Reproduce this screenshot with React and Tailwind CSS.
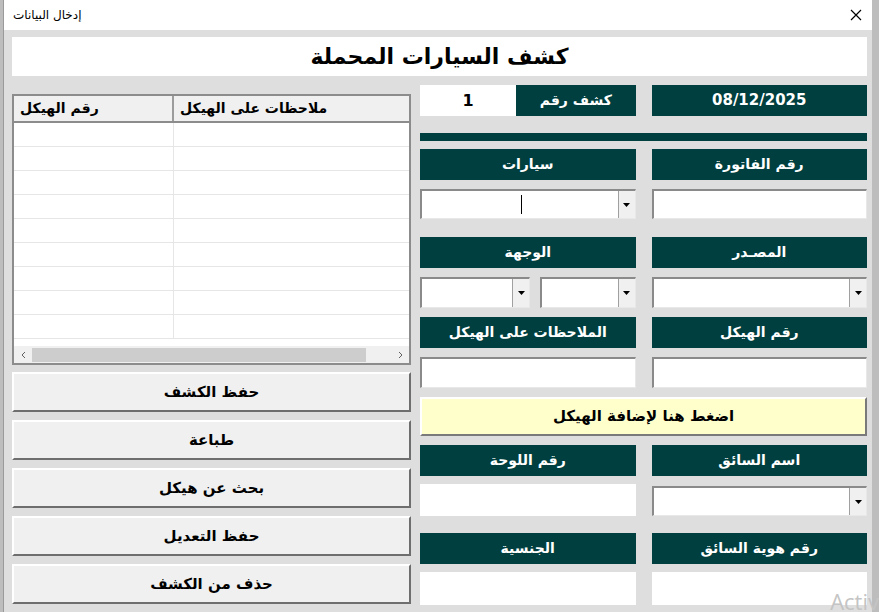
import React from 'react';

const font = { fontFamily: '"DejaVu Sans", "Noto Sans", sans-serif' };

const Label = ({ children }) => (
  <div className="h-[31px] bg-[#003f3f] text-white font-bold text-[14px] flex items-center justify-center" dir="rtl">
    {children}
  </div>
);

const Arrow = () => (
  <div className="w-[17px] h-full bg-[#f0f0f0] border-l border-[#a0a0a0] flex items-center justify-center">
    <svg width="7" height="4" viewBox="0 0 7 4"><path d="M0 0h7L3.5 4z" fill="#000" /></svg>
  </div>
);

const TextBox = ({ h = 'h-[31px]', children }) => (
  <div className={`${h} bg-white border-t-2 border-l-2 border-[#8a8a8a] border-b border-r border-b-[#e8e8e8] border-r-[#e8e8e8] relative`}>
    {children}
  </div>
);

const Combo = ({ h = 'h-[31px]', children }) => (
  <div className={`${h} bg-white border-t-2 border-l-2 border-[#8a8a8a] border-b border-r border-b-[#e8e8e8] border-r-[#e8e8e8] flex`}>
    <div className="flex-1 relative">{children}</div>
    <Arrow />
  </div>
);

const Plain = ({ h = 'h-[32px]' }) => <div className={`${h} bg-white`} />;

const Button = ({ children }) => (
  <div className="h-[40px] bg-[#f0f0f0] border-t-2 border-l-2 border-white border-b-2 border-r-2 border-b-[#6e6e6e] border-r-[#6e6e6e] flex items-center justify-center text-[15px] font-bold text-black" dir="rtl">
    {children}
  </div>
);

const App = () => {
  const rows = Array.from({ length: 9 });
  return (
    <div className="w-[879px] h-[612px] bg-[#bdbdbd] overflow-hidden relative" style={font}>
      <div className="ml-[3px] w-[869px] h-[612px] bg-[#dedede] border-l border-[#9a9a9a] flex flex-col">
        {/* title bar */}
        <div className="h-[30px] bg-white flex items-center justify-between pl-[9px] pr-[10px]">
          <span className="text-[12px] text-black" dir="rtl">إدخال البيانات</span>
          <svg width="12" height="12" viewBox="0 0 12 12"><path d="M1 1l10 10M11 1L1 11" stroke="#000" strokeWidth="1.2" /></svg>
        </div>

        {/* header */}
        <div className="mt-[7px] ml-[8px] w-[855px] h-[39px] bg-white flex items-center justify-center">
          <span className="text-[22px] font-bold text-black" dir="rtl">كشف السيارات المحملة</span>
        </div>

        <div className="flex mt-[9px] ml-[8px] gap-[9px]">
          {/* left column */}
          <div className="w-[399px] flex flex-col pt-[9px]">
            <div className="h-[271px] bg-white border-2 border-[#8c8c8c] flex flex-col">
              <div className="h-[27px] flex bg-[#f0f0f0] border-b-2 border-[#8c8c8c] text-[14px] font-bold text-black">
                <div className="w-[160px] border-r-2 border-[#9c9c9c] flex items-center pl-[6px]">
                  <span dir="rtl">رقم الهيكل</span>
                </div>
                <div className="flex-1 flex items-center pl-[6px]">
                  <span dir="rtl">ملاحظات على الهيكل</span>
                </div>
              </div>
              <div className="flex-1 flex flex-col overflow-hidden">
                {rows.map((_, i) => (
                  <div key={i} className="h-[24px] shrink-0 flex border-b border-[#e6e6e6]">
                    <div className="w-[160px] border-r border-[#e6e6e6]" />
                    <div className="flex-1" />
                  </div>
                ))}
              </div>
              <div className="h-[17px] shrink-0 bg-[#f0f0f0] flex items-center">
                <div className="w-[18px] flex justify-center">
                  <svg width="5" height="8" viewBox="0 0 5 8"><path d="M4 1L1 4l3 3" stroke="#606060" fill="none" /></svg>
                </div>
                <div className="w-[334px] h-[14px] bg-[#cdcdcd]" />
                <div className="flex-1 flex justify-end pr-[6px]">
                  <svg width="5" height="8" viewBox="0 0 5 8"><path d="M1 1l3 3-3 3" stroke="#606060" fill="none" /></svg>
                </div>
              </div>
            </div>
            <div className="mt-[7px] flex flex-col gap-[8px]">
              <Button>حفظ الكشف</Button>
              <Button>طباعة</Button>
              <Button>بحث عن هيكل</Button>
              <Button>حفظ التعديل</Button>
              <Button>حذف من الكشف</Button>
            </div>
          </div>

          {/* right column */}
          <div className="w-[447px] flex flex-col">
            <div className="grid grid-cols-2 gap-x-[16px] h-[31px]">
              <div className="flex">
                <div className="w-[96px] bg-white flex items-center justify-center text-[16px] font-bold text-black">1</div>
                <div className="flex-1 bg-[#003f3f] text-white font-bold text-[14px] flex items-center justify-center" dir="rtl">كشف رقم</div>
              </div>
              <div className="bg-[#003f3f] text-white font-bold text-[15px] flex items-center justify-center">08/12/2025</div>
            </div>

            <div className="mt-[17px] h-[8px] bg-[#003f3f]" />

            <div className="mt-[8px] grid grid-cols-2 gap-x-[16px]">
              <Label>سيارات</Label>
              <Label>رقم الفاتورة</Label>
            </div>
            <div className="mt-[9px] grid grid-cols-2 gap-x-[16px]">
              <Combo h="h-[30px]">
                <div className="absolute left-[99px] top-[4px] w-px h-[19px] bg-black" />
              </Combo>
              <TextBox h="h-[30px]" />
            </div>

            <div className="mt-[18px] grid grid-cols-2 gap-x-[16px]">
              <Label>الوجهة</Label>
              <Label>المصـدر</Label>
            </div>
            <div className="mt-[9px] grid grid-cols-2 gap-x-[16px]">
              <div className="flex gap-[10px]">
                <div className="w-[110px]"><Combo /></div>
                <div className="flex-1"><Combo /></div>
              </div>
              <Combo />
            </div>

            <div className="mt-[9px] grid grid-cols-2 gap-x-[16px]">
              <Label>الملاحظات على الهيكل</Label>
              <Label>رقم الهيكل</Label>
            </div>
            <div className="mt-[9px] grid grid-cols-2 gap-x-[16px]">
              <TextBox />
              <TextBox />
            </div>

            <div className="mt-[9px] h-[39px] bg-[#ffffcc] border-t-2 border-l-2 border-white border-b-2 border-r-2 border-b-[#7a7a7a] border-r-[#7a7a7a] flex items-center justify-center text-[15px] font-bold text-black" dir="rtl">
              اضغط هنا لإضافة الهيكل
            </div>

            <div className="mt-[9px] grid grid-cols-2 gap-x-[16px]">
              <Label>رقم اللوحة</Label>
              <Label>اسم السائق</Label>
            </div>
            <div className="mt-[8px] grid grid-cols-2 gap-x-[16px] items-end">
              <Plain h="h-[32px]" />
              <Combo h="h-[30px]" />
            </div>

            <div className="mt-[17px] grid grid-cols-2 gap-x-[16px]">
              <Label>الجنسية</Label>
              <Label>رقم هوية السائق</Label>
            </div>
            <div className="mt-[8px] grid grid-cols-2 gap-x-[16px]">
              <Plain h="h-[33px]" />
              <Plain h="h-[33px]" />
            </div>
          </div>
        </div>
      </div>
      <div className="absolute right-0 bottom-[-6px] text-[22px] text-[#c4c4c4]" style={{ fontFamily: '"Open Sans", sans-serif' }}>Activ</div>
    </div>
  );
};

export default App;
